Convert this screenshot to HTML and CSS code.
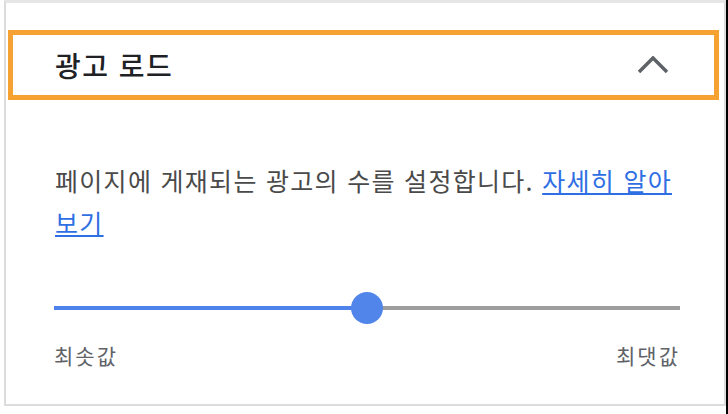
FILE: index.html
```html
<!DOCTYPE html>
<html lang="ko">
<head>
    <meta charset="UTF-8">
    <meta name="viewport" content="width=device-width, initial-scale=1.0">
    <title>광고 로드</title>
    <link rel="stylesheet" href="styles.css">
</head>
<body>
    <div class="frame">
        <div class="panel">
            <div class="section-header">
                <h2>광고 로드</h2>
                <svg class="chevron" width="32" height="18" viewBox="0 0 32 18">
                    <path d="M2 16 L16 2 L30 16" fill="none" stroke="#5f6368" stroke-width="3.5"/>
                </svg>
            </div>

            <p class="desc">페이지에 게재되는 광고의 수를 설정합니다. <a href="#">자세히 알아보기</a></p>

            <div class="slider">
                <div class="track">
                    <div class="fill" style="width: 50%"></div>
                    <div class="rest"></div>
                </div>
                <div class="thumb" style="left: 50%"></div>
            </div>

            <div class="slider-labels">
                <span>최솟값</span>
                <span>최댓값</span>
            </div>
        </div>
    </div>
</body>
</html>
```

FILE: styles.css
```css
body {
    margin: 0;
    background-color: #fff;
    font-family: "Noto Sans CJK KR", "Noto Sans", sans-serif;
    color: #444;
}

.frame {
    height: 414px;
    border-right: 2px solid #000;
    overflow: hidden;
}

.panel {
    margin-left: 4px;
    border-left: 2px solid #dcdcdc;
    border-right: 2px solid #dcdcdc;
    border-top: 3px solid #e6e6e6;
    border-bottom: 2px solid #dcdcdc;
    height: 401px;
}

.section-header {
    display: flex;
    justify-content: space-between;
    align-items: center;
    margin: 27px 5px 0 2px;
    height: 60px;
    padding: 0 45px 0 42px;
    border: 5px solid #f5a233;
}

.section-header h2 {
    margin: 0;
    font-size: 28px;
    font-weight: 500;
    letter-spacing: 1.5px;
    color: #202124;
}

.chevron {
    display: block;
}

.desc {
    margin: 59px 44px 0 49px;
    font-size: 25px;
    line-height: 42px;
    letter-spacing: 1.3px;
    color: #4a4a4a;
}

.desc a {
    color: #2f6fe4;
    text-decoration: underline;
}

.slider {
    position: relative;
    height: 32px;
    margin: 49px 44px 0 48px;
    display: flex;
    align-items: center;
}

.track {
    display: flex;
    width: 100%;
    height: 4px;
}

.fill {
    background-color: #4f82ea;
}

.rest {
    flex: 1;
    background-color: #9e9e9e;
}

.thumb {
    position: absolute;
    top: 0;
    width: 32px;
    height: 32px;
    margin-left: -16px;
    border-radius: 50%;
    background-color: #5285ea;
}

.slider-labels {
    display: flex;
    justify-content: space-between;
    margin: 17px 44px 0 48px;
    font-size: 21px;
    line-height: 28px;
    letter-spacing: 2px;
    color: #5f6368;
}
```
